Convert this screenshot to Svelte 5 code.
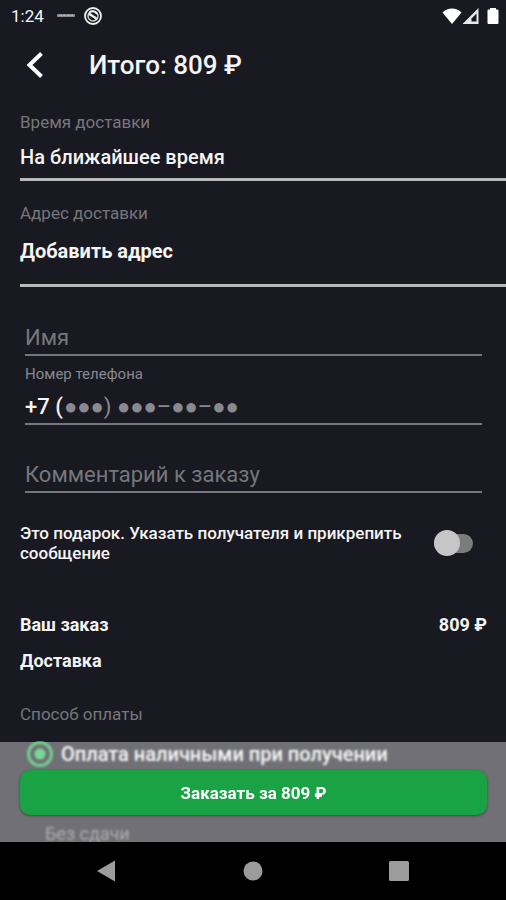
<script>
  let name = "";
  let phone = "+7 (";
  let comment = "";
  let isGift = false;
  let payment = "cash";
  let total = 809;
</script>

<div class="phone">
  <div class="status-bar">
    <span class="clock">1:24</span>
    <svg class="dash" width="18" height="6" viewBox="0 0 18 6" aria-hidden="true">
      <rect x="0" y="1" width="18" height="3" rx="1" fill="#8e8e92" />
      <path d="M2 2.500h14" stroke="#b4b4b8" stroke-width="1" stroke-dasharray="3 1" />
    </svg>
    <svg class="badge" width="20" height="20" viewBox="0 0 20 20" fill="none" aria-hidden="true">
      <circle cx="10" cy="10" r="8" stroke="#f2f2f2" stroke-width="1.8" />
      <circle cx="10" cy="10" r="5" stroke="#d8d8d8" stroke-width="1.4" />
      <path d="M6 7.500C8.500 10.500 11 9.500 14 13.500" stroke="#f2f2f2" stroke-width="2.400" />
      <path d="M6.500 6.500C9 4.500 12.500 5 14 8" stroke="#f2f2f2" stroke-width="2" />
    </svg>
    <div class="signals">
      <svg width="20" height="18" viewBox="0 0 20 18" aria-hidden="true">
        <path d="M10 17L0.500 5.500C5.500 0 14.500 0 19.500 5.500Z" fill="#fff" />
      </svg>
      <svg width="17" height="18" viewBox="0 0 17 18" aria-hidden="true">
        <path d="M16.500 1V17H0.500Z" fill="#e8e8e8" />
        <path d="M14.500 6.500V14.500H9.500V11.500Z" fill="#191922" />
      </svg>
      <svg class="battery" width="12" height="18" viewBox="0 0 12 18" aria-hidden="true">
        <path d="M3 1h6v1.500h1.500a1 1 0 0 1 1 1V16a1 1 0 0 1-1 1h-9a1 1 0 0 1-1-1V3.500a1 1 0 0 1 1-1H3Z" fill="#fff" />
      </svg>
    </div>
  </div>

  <header>
    <button class="back" aria-label="Назад">
      <svg width="20" height="30" viewBox="0 0 20 30" fill="none" aria-hidden="true">
        <path d="M17.500 3.500L5.500 15L17.500 26.500" stroke="#fff" stroke-width="4" />
      </svg>
    </button>
    <h1>Итого: {total} ₽</h1>
  </header>

  <main>
    <form class="scroll" id="order" on:submit|preventDefault>
      <section class="picker">
        <h2>Время доставки</h2>
        <button type="button" class="value time">На ближайшее время</button>
      </section>

      <section class="picker">
        <h2>Адрес доставки</h2>
        <button type="button" class="value address">Добавить адрес</button>
      </section>

      <div class="fields">
        <input class="line" type="text" bind:value={name} placeholder="Имя" aria-label="Имя" />

        <label class="caption" for="phone">Номер телефона</label>
        <div class="line phone-line">
          <input id="phone" type="tel" bind:value={phone} />
          <span class="mask">●●●) ●●●–●●–●●</span>
        </div>

        <input class="line comment" type="text" bind:value={comment} placeholder="Комментарий к заказу" aria-label="Комментарий к заказу" />
      </div>

      <div class="gift">
        <label for="gift">Это подарок. Указать получателя и прикрепить сообщение</label>
        <input id="gift" class="switch" type="checkbox" bind:checked={isGift} />
      </div>

      <div class="summary">
        <div class="row"><span>Ваш заказ</span><span>{total} ₽</span></div>
        <div class="row"><span>Доставка</span></div>
      </div>

      <section class="payment">
        <h2>Способ оплаты</h2>
        <label class="option">
          <input type="radio" bind:group={payment} value="cash" />
          Оплата наличными при получении
        </label>
        <input class="change" type="text" placeholder="Без сдачи" aria-label="Без сдачи" />
      </section>
    </form>

    <div class="checkout">
      <button class="submit" form="order">Заказать за {total} ₽</button>
    </div>
  </main>

  <nav>
    <button aria-label="Назад">
      <svg width="22" height="22" viewBox="0 0 22 22" aria-hidden="true"><path d="M19 0.500V21.500L1 11Z" fill="#9c9c9c" /></svg>
    </button>
    <button aria-label="Домой">
      <svg width="22" height="22" viewBox="0 0 22 22" aria-hidden="true"><circle cx="11" cy="11" r="9.500" fill="#9c9c9c" /></svg>
    </button>
    <button aria-label="Недавние">
      <svg width="22" height="22" viewBox="0 0 22 22" aria-hidden="true"><rect x="1" y="1" width="20" height="20" rx="1.500" fill="#9c9c9c" /></svg>
    </button>
  </nav>
</div>

<style>
  :global(body) {
    background: #191922;
  }

  .phone {
    display: flex;
    flex-direction: column;
    height: 100vh;
    background: #191922;
    color: #f4f4f4;
    font-family: Roboto, "Liberation Sans", sans-serif;
    overflow: hidden;
  }

  button {
    padding: 0;
    border: none;
    background: none;
    color: inherit;
    font-family: inherit;
    cursor: pointer;
  }

  input {
    box-sizing: border-box;
    margin: 0;
    padding: 0;
    border: none;
    border-radius: 0;
    outline: none;
    background: none;
    color: inherit;
    font-family: inherit;
  }

  svg {
    display: block;
    flex: none;
  }

  .status-bar {
    display: flex;
    align-items: center;
    height: 32px;
    padding: 0 7px 0 11px;
  }

  .clock {
    font-size: 17px;
    line-height: 32px;
  }

  .dash {
    margin-left: 13px;
  }

  .badge {
    margin-left: 8px;
  }

  .signals {
    display: flex;
    align-items: center;
    margin-left: auto;
  }

  .battery {
    margin-left: 8px;
  }

  header {
    display: flex;
    align-items: center;
    height: 66px;
    padding: 0 24px;
  }

  .back {
    margin-right: 45px;
  }

  h1 {
    margin: 0;
    font-size: 26px;
    line-height: 32px;
    font-weight: 500;
  }

  main {
    position: relative;
    flex: 1;
    min-height: 0;
  }

  .scroll {
    height: 100%;
    overflow-y: auto;
    scrollbar-width: none;
  }

  h2 {
    margin: 0;
    color: #77777b;
    font-size: 17px;
    line-height: 24px;
    font-weight: 400;
  }

  .picker {
    margin-left: 20px;
    padding-top: 12px;
  }

  .value {
    display: block;
    width: 100%;
    border-bottom: 3px solid #b9b9bb;
    text-align: left;
    font-size: 20px;
    line-height: 24px;
  }

  .time {
    padding: 11px 0 9px;
    margin-bottom: 8px;
    font-weight: 500;
  }

  .address {
    padding: 14px 0 21px;
    font-weight: 700;
  }

  .fields {
    display: flex;
    flex-direction: column;
    padding: 29px 24px 0 25px;
  }

  .line {
    height: 40px;
    padding-top: 4px;
    border-bottom: 2px solid #77777b;
    font-size: 22px;
  }

  .line::placeholder {
    color: #77777b;
    opacity: 1;
  }

  .caption {
    margin-top: 8px;
    color: #8a8a8e;
    font-size: 15px;
    line-height: 20px;
  }

  .phone-line {
    box-sizing: border-box;
    display: flex;
    align-items: center;
    height: 41px;
    padding-top: 6px;
  }

  .phone-line input {
    width: 39px;
    font-size: 22px;
    font-weight: 500;
  }

  .mask {
    color: #8a8a8e;
    white-space: pre;
  }

  .comment {
    margin-top: 28px;
  }

  .gift {
    display: flex;
    justify-content: space-between;
    align-items: center;
    gap: 20px;
    padding: 30px 33px 0 20px;
    font-size: 17px;
    line-height: 20px;
    font-weight: 500;
  }

  .switch {
    flex: none;
    display: flex;
    align-items: center;
    width: 39px;
    height: 19px;
    border-radius: 10px;
    appearance: none;
    background: #7c7c7e;
    cursor: pointer;
  }

  .switch::before {
    content: "";
    flex: none;
    width: 26px;
    height: 26px;
    border-radius: 50%;
    background: #c6c6c6;
  }

  .switch:checked {
    justify-content: flex-end;
  }

  .summary {
    padding: 44px 19px 0 20px;
    font-size: 18px;
    line-height: 36px;
    font-weight: 700;
  }

  .row {
    display: flex;
    justify-content: space-between;
  }

  .payment {
    padding: 23px 20px 0;
  }

  .option {
    display: flex;
    align-items: center;
    gap: 8px;
    margin-top: 15px;
    padding-left: 7px;
    font-size: 20px;
    line-height: 26px;
    font-weight: 500;
  }

  .option input {
    width: 26px;
    height: 26px;
    border: 3px solid #1fb44c;
    border-radius: 50%;
    appearance: none;
  }

  .option input:checked {
    background: radial-gradient(circle, #1fc453 5px, transparent 6px);
  }

  .change {
    display: block;
    height: 28px;
    margin: 52px 0 120px 25px;
    font-size: 18px;
  }

  .change::placeholder {
    color: #77777b;
    opacity: 1;
  }

  .checkout {
    position: absolute;
    left: 0;
    right: 0;
    bottom: 0;
    padding: 28px 19px 27px 20px;
    background: rgba(255, 255, 255, 0.38);
    backdrop-filter: blur(1px);
  }

  .submit {
    display: block;
    width: 100%;
    height: 45px;
    border-radius: 10px;
    background: #19a344;
    box-shadow: 0 1px 3px rgba(0, 0, 0, 0.4);
    color: #fff;
    font-size: 17px;
    font-weight: 700;
  }

  nav {
    display: flex;
    justify-content: center;
    align-items: center;
    gap: 124px;
    height: 58px;
    background: #000;
  }
</style>
